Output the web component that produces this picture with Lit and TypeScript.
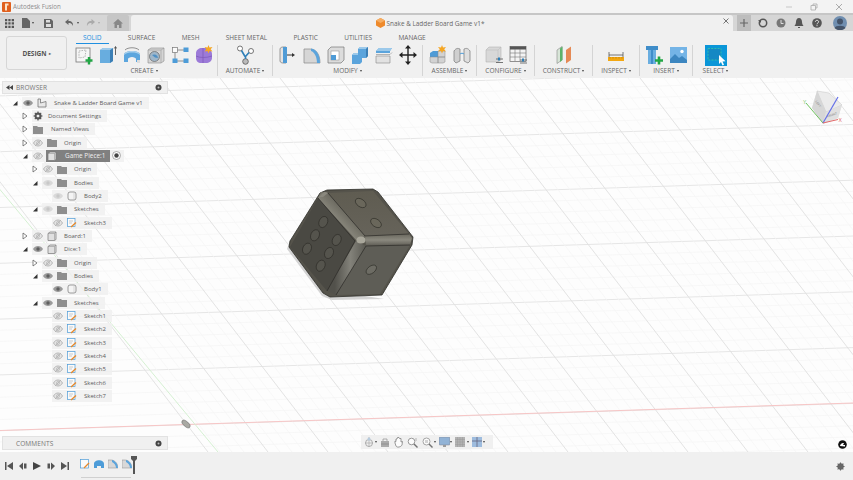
import { LitElement, html, css, svg } from 'lit';
import { customElement } from 'lit/decorators.js';

// ---- ribbon icons, all drawn in an 18x20 box
const s = (body: unknown) => html`<svg class="ico" viewBox="0 0 18 20" width="18" height="20">${body}</svg>`;

const ribbonIcons: Record<string, unknown> = {
  sketch: s(svg`<rect x="1" y="3" width="14" height="14" fill="#f6f6f6" stroke="#777" stroke-width=".8"/>
    <path d="M4 6l7-1-1 7-6 1z" fill="none" stroke="#999" stroke-width=".7" stroke-dasharray="1.5 1"/>
    <path d="M10.5 15.5h7M14 12v7.5" stroke="#22a645" stroke-width="2.4"/>`),
  extrude: s(svg`<path d="M1 5l3-2h10v13l-3 2H1z" fill="#68addf"/><path d="M11 5v13l3-2V3z" fill="#3c7fb5"/><path d="M1 5h10l3-2H4z" fill="#9cc9ea"/>
    <path d="M16.5 10V2M15.3 3.5l1.2-2 1.2 2" stroke="#444" stroke-width=".8" fill="none"/>`),
  revolve: s(svg`<path d="M1 10c0-3 4-4 8-4s8 1 8 4v7h-4v-3c0-1-2-2-4-2s-4 1-4 2v3H1z" fill="#5ca6de"/><path d="M1 10c0-3 4-4 8-4s8 1 8 4c-2-2-5-2.500-8-2.500S3 8 1 10z" fill="#a9d0ec"/>
    <path d="M14 15h3v3h-3z" fill="#ddd"/><path d="M2 5c3-3 11-3 14 0" fill="none" stroke="#666" stroke-width=".7"/>`),
  hole: s(svg`<path d="M1 5l3-2h13v13l-3 2H1z" fill="#d5d5d5" stroke="#8a8a8a" stroke-width=".6"/><path d="M14 5v13M1 5h13l3-2" stroke="#9a9a9a" stroke-width=".6" fill="none"/>
    <circle cx="7.500" cy="11.500" r="5" fill="#9fb6c9" stroke="#666" stroke-width=".7"/><path d="M5 10a4 4 0 0 1 6 3l-3-.5z" fill="#4f90c4"/>`),
  pattern: s(svg`<path d="M4 5h11M4 5v11M4 16h11M15 5v0" stroke="#777" stroke-width=".8" fill="none"/><rect x="1.500" y="2.500" width="5" height="5" fill="#fafafa" stroke="#777" stroke-width=".7"/>
    <rect x="12.500" y="2.500" width="5" height="4.500" fill="#4d9cd8"/><rect x="1.500" y="13.500" width="5" height="4.500" fill="#4d9cd8"/><rect x="12.500" y="13.500" width="5" height="4.500" fill="#4d9cd8"/>`),
  form: s(svg`<path d="M1 8c0-3 3-5 6-5h4c3 0 6 3 6 6v4c0 3-3 5-6 5H6c-3 0-5-2-5-5z" fill="#9c7ad8"/><path d="M8 3v15M1 11c4 2 10 2 16 0" stroke="#7b58b8" stroke-width=".7" fill="none"/>
    <path d="M13.500 0l1 2.500 3 -.5-1.800 2.200 1.800 2.300-3-.5-1 2.500-1-2.500-3 .5 1.800-2.300-1.800-2.200 3 .5z" fill="#f5a623"/>`),
  automate: s(svg`<circle cx="4" cy="3.500" r="2.500" fill="#fff" stroke="#555" stroke-width=".8"/><circle cx="15" cy="6" r="2.500" fill="#fff" stroke="#555" stroke-width=".8"/><circle cx="9.500" cy="16.500" r="2.800" fill="#bbb" stroke="#555" stroke-width=".8"/>
    <path d="M5.500 5.500L9 11.500M13 7.500L9.500 11.500M9.500 11.500V14" stroke="#2e7fb8" stroke-width="1.600" fill="none"/>`),
  press: s(svg`<path d="M1 4c0-1.500 2-2 3-2h3v16H4c-1 0-3-.5-3-2z" fill="#e4e4e4" stroke="#777" stroke-width=".7"/><path d="M4 2h4v16H4z" fill="#4f9bd6"/><path d="M8 10h6" stroke="#333" stroke-width="1"/><path d="M13 8l3 2-3 2z" fill="#333"/>`),
  fillet: s(svg`<path d="M1 18V4h6c6 0 10 5 10 14z" fill="#d6d6d6" stroke="#888" stroke-width=".7"/><path d="M8 3.500c5 .5 9 6 9 14.500h-3c0-6-2.500-11-6-12z" fill="#5ba4dc"/>`),
  shell: s(svg`<path d="M1 5l3-3h13v13l-3 3H1z" fill="#dcdcdc" stroke="#777" stroke-width=".7"/><rect x="4" y="6" width="8" height="9" fill="#fff" stroke="#888" stroke-width=".5"/><path d="M4 10h5v5H4z" fill="#4f9bd6"/>`),
  combine: s(svg`<path d="M1 10l2-2h8v9l-2 2H1z" fill="#5ba4dc"/><path d="M7 4l2-2h8v9l-2 2H7z" fill="#5ba4dc"/><path d="M7 4h8l2-2H9zM1 10h6V8H3z" fill="#9cc9ea"/><path d="M15 4v9l2-2V2z" fill="#3c7fb5"/>`),
  offset: s(svg`<path d="M1 6l3-3h13l-2 3v2H1z" fill="#5ba4dc"/><path d="M1 6h14l2-3H4z" fill="#9cc9ea"/><path d="M1 11h14v7H1z" fill="#e2e2e2" stroke="#888" stroke-width=".6"/><path d="M1 9.500h14l2-2" stroke="#777" stroke-width=".5" fill="none"/>`),
  move: s(svg`<path d="M9 2v16M1 10h16" stroke="#222" stroke-width="1.400"/><path d="M9 0l3 3.500H6zM9 20l3-3.500H6zM0 10l3.500-3v6zM18 10l-3.500-3v6z" fill="#222"/>`),
  assemble: s(svg`<path d="M1 8l3-2h5v6H1z" fill="#4f9bd6"/><path d="M9 6h7v6H9zM1 12h8v6H3l-2-1zM9 12h7v5l-2 1H9z" fill="#d2d2d2" stroke="#888" stroke-width=".5"/>
    <path d="M13 0l1 2.500 3-.5-1.800 2.200L17 6.500l-3-.5-1 2.500-1-2.500-3 .5 1.800-2.300L9 2l3 .5z" fill="#f5a623"/>`),
  joint: s(svg`<path d="M1 6c2-3 4-3 6-2v12l-4 2-2-2z" fill="#cfcfcf" stroke="#777" stroke-width=".7"/><path d="M17 6c-2-3-4-3-6-2v12l4 2 2-2z" fill="#dedede" stroke="#777" stroke-width=".7"/><path d="M7 9c1-1 3-1 4 0" stroke="#4f9bd6" stroke-width="1" fill="none"/>`),
  param: s(svg`<path d="M1 5l3-3h12v13l-3 2H1z" fill="#d8d8d8" stroke="#aaa" stroke-width=".5"/><path d="M1 5h12l3-3M13 5v12" stroke="#bbb" stroke-width=".5" fill="none"/>
    <path d="M11 14h7M11 17.500h7" stroke="#555" stroke-width=".8"/><path d="M13 12.500h2v3h-2z" fill="#2e7fb8"/>`),
  table: s(svg`<rect x="1" y="1.500" width="16" height="15" fill="#f4f4f4" stroke="#666" stroke-width=".7"/><rect x="1" y="1.500" width="16" height="3" fill="#555"/><path d="M1 8h16M1 12h16M6 4v12M11 4v12" stroke="#777" stroke-width=".6"/>
    <path d="M11 15h7M11 18h7" stroke="#555" stroke-width=".8"/><path d="M13 13.500h2v3h-2z" fill="#2e7fb8"/>`),
  construct: s(svg`<path d="M2 5l5-3.500V15l-5 3.500z" fill="#d8e5d8" stroke="#888" stroke-width=".6"/><path d="M5 3.500l2.500-2V15L5 17z" fill="#5bb36a"/><path d="M11 5l5-3.500V15l-5 3.500z" fill="#e58a55"/>`),
  inspect: s(svg`<path d="M2 7v6M16 7v6M2 10h14" stroke="#555" stroke-width=".8"/><rect x="1" y="12" width="16" height="4" fill="#f3a712"/><path d="M3 12v1.500M6 12v1.500M9 12v1.500M12 12v1.500M15 12v1.500" stroke="#9a6a00" stroke-width=".5"/>`),
  insertBolt: s(svg`<path d="M1 1h12v4H1z" fill="#3f8dc9"/><path d="M3 5h8v14H3z" fill="#6aaee0"/><path d="M7 1v18" stroke="#3f8dc9" stroke-width="2"/><path d="M10 15.500h8M14 11.500v8" stroke="#22a645" stroke-width="2.600"/>`),
  insertImg: s(svg`<rect x="1" y="2" width="17" height="16" fill="#74b4e6"/><circle cx="13" cy="6.500" r="1.700" fill="#fff"/><path d="M1 14l5-5 4 4 3-2 5 4v3H1z" fill="#3c86c0"/>`),
};

const selectIcon = html`<svg class="sel-ico" viewBox="0 0 22 21" width="22" height="21"><rect width="22" height="21" fill="#0a96d8"/>
  <rect x="3" y="3.500" width="13" height="11.500" fill="#1488c4" stroke="#37c8a5" stroke-width=".8" stroke-dasharray="2 1.200"/><path d="M14 10l0 9 2-2 1.500 3.500 1.500-.7-1.500-3.300 3-.3z" fill="#fff"/></svg>`;

// x positions of groups come from their fixed widths, separators are the right borders
const groups = [
  { label: 'CREATE', w: 147, icons: ['sketch', 'extrude', 'revolve', 'hole', 'pattern', 'form'] },
  { label: 'AUTOMATE', w: 55, icons: ['automate'] },
  { label: 'MODIFY', w: 150, icons: ['press', 'fillet', 'shell', 'combine', 'offset', 'move'] },
  { label: 'ASSEMBLE', w: 54, icons: ['assemble', 'joint'] },
  { label: 'CONFIGURE', w: 58, icons: ['param', 'table'] },
  { label: 'CONSTRUCT', w: 58, icons: ['construct'] },
  { label: 'INSPECT', w: 47, icons: ['inspect'] },
  { label: 'INSERT', w: 53, icons: ['insertBolt', 'insertImg'] },
  { label: 'SELECT', w: 45, icons: [] },
];

const tabs = ['SOLID', 'SURFACE', 'MESH', 'SHEET METAL', 'PLASTIC', 'UTILITIES', 'MANAGE'];

// ---- browser tree
const eyeIcon = (kind: string) => {
  if (kind === 'on')
    return html`<svg class="t-eye" viewBox="0 0 10 8" width="10" height="8"><path d="M0 4c2-4 8-4 10 0-2 4-8 4-10 0z" fill="#9a9a9a"/><circle cx="5" cy="4" r="1.700" fill="#5f5f5f"/></svg>`;
  if (kind === 'faint')
    return html`<svg class="t-eye" viewBox="0 0 10 8" width="10" height="8"><path d="M0 4c2-4 8-4 10 0-2 4-8 4-10 0z" fill="#d9d9d9"/><circle cx="5" cy="4" r="1.700" fill="#c8c8c8"/></svg>`;
  return html`<svg class="t-eye" viewBox="0 0 10 8" width="10" height="8"><path d="M.5 4c2-4 7-4 9 0-2 4-7 4-9 0z" fill="#e4e4e4" stroke="#aaa" stroke-width=".8"/><path d="M2 7l6-6" stroke="#aaa" stroke-width=".7"/><circle cx="5" cy="4" r="1.500" fill="none" stroke="#aaa" stroke-width=".6"/></svg>`;
};

const treeIcons: Record<string, unknown> = {
  doc: html`<svg viewBox="0 0 10 10" width="10" height="10"><path d="M1 9V1h2.500v4L9 3.500V9z" fill="#e8e8e8" stroke="#777" stroke-width=".8"/></svg>`,
  gear: html`<svg viewBox="0 0 10 10" width="10" height="10"><circle cx="5" cy="5" r="2.700" fill="none" stroke="#555" stroke-width="1.700"/><path d="M5 .5v9M.5 5h9M1.800 1.800l6.400 6.400M8.200 1.800L1.800 8.200" stroke="#555" stroke-width="1.200"/><circle cx="5" cy="5" r="1.300" fill="#eee"/></svg>`,
  folder: html`<svg viewBox="0 0 10 9" width="10" height="9"><path d="M0 1h4l1 1h5v7H0z" fill="#8e8e8e"/></svg>`,
  comp: html`<svg viewBox="0 0 10 10" width="10" height="10"><path d="M1 2.500L3 1h6v7.500L7.500 9.500H1z" fill="#e0e0e0" stroke="#777" stroke-width=".7"/><path d="M7.500 2.500v7M1 2.500h6.500L9 1" stroke="#888" stroke-width=".5" fill="none"/></svg>`,
  body: html`<svg viewBox="0 0 10 10" width="10" height="10"><rect x="1" y="1" width="8" height="8" rx="2" fill="#f4f4f4" stroke="#777" stroke-width=".7"/><path d="M7 1.500v7" stroke="#bbb" stroke-width=".5"/></svg>`,
  sk: html`<svg viewBox="0 0 10 10" width="10" height="10"><rect x=".5" y=".5" width="7.500" height="8" fill="#fafafa" stroke="#4d9cd8" stroke-width=".7"/><path d="M2 3h4M2 5h3" stroke="#999" stroke-width=".5"/><path d="M4 9l5-4.500" stroke="#e8882a" stroke-width="1.300"/></svg>`,
};

type Node = { lvl: number; arrow?: 'open' | 'closed'; eye?: string; icon: string; label: string; sel?: boolean; tight?: boolean };

const tree: Node[] = [
  { lvl: 0, arrow: 'open', eye: 'on', icon: 'doc', label: 'Snake & Ladder Board Game v1' },
  { lvl: 1, arrow: 'closed', icon: 'gear', label: 'Document Settings', tight: true },
  { lvl: 1, arrow: 'closed', icon: 'folder', label: 'Named Views' },
  { lvl: 1, arrow: 'closed', eye: 'off', icon: 'folder', label: 'Origin' },
  { lvl: 1, arrow: 'open', eye: 'off', icon: 'comp', label: 'Game Piece:1', sel: true },
  { lvl: 2, arrow: 'closed', eye: 'off', icon: 'folder', label: 'Origin' },
  { lvl: 2, arrow: 'open', eye: 'faint', icon: 'folder', label: 'Bodies' },
  { lvl: 3, eye: 'faint', icon: 'body', label: 'Body2' },
  { lvl: 2, arrow: 'open', eye: 'faint', icon: 'folder', label: 'Sketches' },
  { lvl: 3, eye: 'off', icon: 'sk', label: 'Sketch3' },
  { lvl: 1, arrow: 'closed', eye: 'off', icon: 'comp', label: 'Board:1' },
  { lvl: 1, arrow: 'open', eye: 'on', icon: 'comp', label: 'Dice:1' },
  { lvl: 2, arrow: 'closed', eye: 'off', icon: 'folder', label: 'Origin' },
  { lvl: 2, arrow: 'open', eye: 'on', icon: 'folder', label: 'Bodies' },
  { lvl: 3, eye: 'on', icon: 'body', label: 'Body1' },
  { lvl: 2, arrow: 'open', eye: 'on', icon: 'folder', label: 'Sketches' },
  ...[1, 2, 3, 4, 5, 6, 7].map((n) => ({ lvl: 3, eye: 'off', icon: 'sk', label: `Sketch${n}` })),
];

const arrowIcon = (a?: string) => {
  if (a === 'open') return html`<svg viewBox="0 0 6 6" width="6" height="6"><path d="M5.500 1v4.500H1z" fill="#333"/></svg>`;
  if (a === 'closed') return html`<svg viewBox="0 0 6 8" width="6" height="8"><path d="M1 1l4 3-4 3z" fill="#fff" stroke="#555" stroke-width=".7"/></svg>`;
  return null;
};

const pin = html`<svg class="pin" viewBox="0 0 7 7" width="7" height="7"><circle cx="3.500" cy="3.500" r="3" fill="#444"/><circle cx="3.500" cy="3.500" r="1" fill="#bbb"/></svg>`;

// ---- canvas: grid, axes, dice and view cube share page coordinates
const gridLines = () => {
  const out: unknown[] = [];
  // near-horizontal family
  for (let i = -6; i < 45; i++) {
    const yL = 151.7 + i * 11.16;
    const major = i % 5 === 0;
    out.push(svg`<line x1="0" y1=${yL} x2="853" y2=${yL - 0.032 * 853} stroke=${major ? '#e6e6e6' : '#f5f5f5'} stroke-width=${major ? 1 : 0.7}/>`);
  }
  // diagonal family
  for (let i = -45; i < 75; i++) {
    const x0 = 460 + i * 12;
    const major = (i + 500) % 5 === 0;
    out.push(svg`<line x1=${x0} y1="78" x2=${x0 + 0.77 * 374} y2="452" stroke=${major ? '#e0e0e0' : '#f5f5f5'} stroke-width=${major ? 0.9 : 0.7}/>`);
  }
  return out;
};

const dice = svg`
  <path d="M287 249L322 296L332 300L384 299L340 292L290 240z" fill="#c9c9c9" opacity=".8"/>
  <path d="M320 193L327 190L373 189L378 192L413 237L412 245L382 295L330 297L323 293L289 247L290 241z" fill="#55534b" stroke="#2f2e2a" stroke-width=".8"/>
  <path d="M328 193L373 191L409 234L365 236z" fill="url(#dTop)"/>
  <path d="M318 198L355 241L327 291L290 247z" fill="#4a4943"/>
  <path d="M366 246L410 245L380 294L336 295z" fill="#5e5d56"/>
  <path d="M321 192L328 193L365 236L357 241L318 198z" fill="url(#dBandA)"/>
  <path d="M365 236L409 234L412 238L410 245L366 246z" fill="url(#dBandB)"/>
  <path d="M356 241L366 246L336 295L327 291z" fill="url(#dBandC)"/>
  <path d="M322 194C324 191 326 192 328 193L323 197L319 197z" fill="#8a887e"/>
  <ellipse cx="361" cy="240" rx="4.500" ry="3.500" fill="#a9a79b"/>
  <path d="M318 198L355 241L327 291M365 236L409 234M366 246L410 245M336 295L366 246M328 193L365 236" fill="none" stroke="#2b2a27" stroke-width=".7"/>
  ${[[323.3, 222], [315, 235.3], [307, 248.7], [336.7, 240], [329, 253], [320.7, 265.7]].map(
    ([x, y]) => svg`<ellipse cx=${x} cy=${y} rx="4.200" ry="5.800" transform="rotate(25 ${x} ${y})" fill="#55544d" stroke="#2b2a25" stroke-width=".6"/>`)}
  ${[[360.7, 203], [376, 223]].map(
    ([x, y]) => svg`<ellipse cx=${x} cy=${y} rx="6" ry="3.800" transform="rotate(35 ${x} ${y})" fill="#6a675b" stroke="#2b2a25" stroke-width=".6"/>`)}
  <ellipse cx="371.300" cy="269.700" rx="6" ry="3.600" transform="rotate(-38 371.300 269.700)" fill="#6d6c64" stroke="#2b2a25" stroke-width=".6"/>
`;

const viewCube = svg`
  <path d="M823 124L812 108L817 91L842 105L838 118z" fill="#e4e4e4"/>
  <path d="M817 91L829 93L842 105L826 112z" fill="#ebebeb" stroke="#c6c6c6" stroke-width=".5"/>
  <path d="M812 108L817 91L826 112L823 124z" fill="#d6d6d6"/>
  <path d="M826 112L842 105L838 118L823 124z" fill="#e0e0e0"/>
  <text x="814" y="104" font-size="3" fill="#777" font-family="Liberation Sans" transform="rotate(55 817 104)">LEFT</text>
  <text x="827" y="117" font-size="3" fill="#777" font-family="Liberation Sans" transform="rotate(-20 829 116)">FRONT</text>
  <path d="M823 123L806 103" stroke="#6ec25e" stroke-width="1"/>
  <path d="M823 123L838 97" stroke="#6470e8" stroke-width="1.200"/>
  <path d="M823 123L838 119.500" stroke="#e2696a" stroke-width="1"/>
  <text x="838.500" y="121.500" font-size="5" fill="#e2696a" font-family="Liberation Sans">X</text>
  <text x="803" y="104" font-size="5" fill="#6ec25e" font-family="Liberation Sans">Y</text>
`;

@customElement('app-root')
export class AppRoot extends LitElement {
  static styles = css`
    :host {
      display: block;
      width: 853px;
      height: 480px;
      overflow: hidden;
      font-family: 'Open Sans', 'Liberation Sans', sans-serif;
      font-size: 6.5px;
      color: #666;
      background: #f0f0f0;
    }
    .page { display: flex; flex-direction: column; height: 480px; }
    svg { display: block; flex: none; }

    .title { height: 13px; flex: none; display: flex; align-items: center; background: #f3f3f3; padding-left: 2px; color: #8c8c8c; font-size: 6.2px; }
    .title .name { margin-left: 2px; flex: 1; }
    .win { display: flex; gap: 17px; padding-right: 10px; align-items: center; }

    .tabbar { height: 18px; flex: none; display: flex; background: #d6d6d6; border-top: 2px solid #c6c6c6; box-sizing: border-box; }
    .qa { width: 131px; display: flex; align-items: center; padding-left: 5px; box-sizing: border-box; gap: 0; }
    .home { margin-left: auto; width: 22px; height: 100%; background: #c6c6c6; border-radius: 2px 2px 0 0; margin-right: 2px; display: flex; align-items: center; justify-content: center; }
    .doc { width: 602px; background: #f0f0f0; display: flex; align-items: center; justify-content: center; position: relative; color: #666; font-size: 6.4px; gap: 2px; border-radius: 3px 3px 0 0; padding-right: 4px; box-sizing: border-box; }
    .doc .x { position: absolute; right: 4px; top: 3px; }
    .right { flex: 1; display: flex; align-items: center; gap: 7px; padding-left: 4px; }
    .plus { width: 14px; height: 16px; background: #bdbdbd; display: flex; align-items: center; justify-content: center; }

    .ribbon { height: 47px; flex: none; display: flex; background: #f0f0f0; }
    .design { width: 61px; height: 34px; margin: 5px 4px 0 6px; flex: none; box-sizing: border-box; border: 1px solid #d6d6d6; border-radius: 3px; display: flex; align-items: center; justify-content: center; font-weight: 700; color: #555; font-size: 6.5px; gap: 2px; }
    .rcol { flex: 1; display: flex; flex-direction: column; }
    .tabs { height: 12px; flex: none; display: flex; gap: 12.300px; box-sizing: border-box; padding-top: 2px; margin-left: 5px; }
    .tab { padding: 0 7px; height: 10px; line-height: 9px; white-space: nowrap; }
    .tab.on { color: #1f8fe0; border-bottom: 1px solid #1f8fe0; }
    .tools { display: flex; height: 35px; margin-left: 0; }
    .group { flex: none; box-sizing: border-box; display: flex; flex-direction: column; align-items: center; margin-top: 2px; height: 31px; border-right: 1px solid #d4d4d4; }
    .group:last-child { border-right: 0; }
    .icons { display: flex; gap: 6px; height: 21px; }
    .glabel { display: flex; align-items: center; gap: 2px; line-height: 9px; white-space: nowrap; }
    .caret { width: 0; height: 0; border-left: 1.500px solid transparent; border-right: 1.500px solid transparent; border-top: 2px solid #444; flex: none; }

    .canvas { position: relative; flex: 1; background: #fdfdfd; overflow: hidden; }
    .scene { position: absolute; inset: 0; }

    .panel { position: absolute; left: 2px; width: 166px; height: 13px; box-sizing: border-box; background: #f0f0f0; border: 1px solid #e2e2e2; display: flex; align-items: center; color: #777; padding-left: 3px; letter-spacing: .1px; }
    .panel.browser { top: 3px; }
    .panel.comments { top: 358px; height: 14px; padding-left: 13px; }
    .panel .pname { margin-left: 3px; flex: 1; }
    .pin { margin-right: 5px; }

    .tree { position: absolute; left: 0; top: 18px; display: flex; flex-direction: column; font-size: 6px; }
    .row { display: flex; align-items: center; height: 13.330px; }
    .arrow { width: 12px; flex: none; display: flex; justify-content: center; padding-right: 2px; box-sizing: border-box; }
    .chip { display: flex; align-items: center; height: 12px; background: rgba(240, 240, 240, .85); padding: 0 6px 0 1px; white-space: nowrap; color: #5c5c5c; }
    .t-eye { margin-right: 4px; }
    .lbl { margin-left: 7px; }
    .tight .lbl { margin-left: 5px; }
    .noeye .lbl { margin-left: 8px; }
    .tight.noeye .lbl { margin-left: 5px; }
    .sel { display: flex; align-items: center; height: 12px; background: #808080; color: #f0f0f0; margin-left: -1px; padding: 0 5px 0 1px; font-size: 6.400px; }
    .sel .lbl { margin-left: 8px; }
    .radio { margin: 0 -3px 0 2px; }

    .nav { position: absolute; left: 361px; top: 357px; height: 14px; width: 132px; background: #f0f0f0; display: flex; align-items: center; padding-left: 3px; box-sizing: border-box; gap: 1px; }
    .nav svg { opacity: .8; }
    .nav .caret { margin-right: 2px; }
    .fusion-badge { position: absolute; left: 838px; top: 362px; }

    .timeline { height: 28px; flex: none; background: #f0f0f0; display: flex; align-items: center; padding-left: 5px; }
    .play { display: flex; gap: 6px; }
    .steps { display: flex; gap: 4px; margin-left: 11px; position: relative; }
    .ruler { position: absolute; left: 1px; right: 6px; bottom: -4px; height: 2px; border-bottom: 1px solid #d0d0d0; }
    .marker { margin-left: -5px; margin-top: -3px; }
    .tgear { margin-left: auto; margin-right: 8px; }
  `;

  private tabBar() {
    return html`<div class="tabbar">
      <div class="qa">
        <svg viewBox="0 0 10 10" width="9" height="9"><path d="M0 0h2.500v2.500H0zM3.700 0h2.500v2.500H3.700zM7.400 0H10v2.500H7.400zM0 3.700h2.500v2.500H0zM3.700 3.700h2.500v2.500H3.700zM7.400 3.700H10v2.500H7.400zM0 7.400h2.500V10H0zM3.700 7.400h2.500V10H3.700zM7.400 7.400H10V10H7.400z" fill="#555"/></svg>
        <svg style="margin-left:8px" viewBox="0 0 8 10" width="8" height="10"><path d="M0 0h5l3 3v7H0z" fill="#666"/></svg>
        <span class="caret" style="margin-left:2px"></span>
        <svg style="margin-left:10px" viewBox="0 0 9 9" width="9" height="9"><path d="M0 0h7l2 2v7H0z" fill="#666"/><rect x="2" y="1" width="4" height="2.500" fill="#ddd"/><rect x="2" y="5" width="5" height="3" fill="#ddd"/></svg>
        <svg style="margin-left:12px" viewBox="0 0 9 8" width="9" height="8"><path d="M3.500 0L0 3l3.500 3V4c2 0 3.500.500 4.500 3 .3-3-1-5-4.500-5z" fill="#666"/></svg>
        <span class="caret" style="margin-left:3px"></span>
        <svg style="margin-left:7px" viewBox="0 0 9 8" width="9" height="8"><path d="M5.500 0L9 3 5.500 6V4c-2 0-3.500.500-4.500 3-.3-3 1-5 4.500-5z" fill="#aaa"/></svg>
        <span class="caret" style="margin-left:3px;border-top-color:#aaa"></span>
        <div class="home"><svg viewBox="0 0 10 9" width="10" height="9"><path d="M5 0l5 4.500H8.500V9H6V6H4v3H1.500V4.500H0z" fill="#888"/></svg></div>
      </div>
      <div class="doc">
        <svg viewBox="0 0 9 10" width="9" height="10"><path d="M4.500 0L9 2.500v5L4.500 10 0 7.500v-5z" fill="#ee8a2c"/><path d="M4.500 0L9 2.500 4.500 5 0 2.500z" fill="#f6ad62"/></svg>
        <span>Snake &amp; Ladder Board Game v1*</span>
        <svg class="x" viewBox="0 0 6 6" width="6" height="6"><path d="M.5.500l5 5M5.500.500l-5 5" stroke="#666" stroke-width=".9"/></svg>
      </div>
      <div class="right">
        <div class="plus"><svg viewBox="0 0 8 8" width="8" height="8"><path d="M4 0v8M0 4h8" stroke="#666" stroke-width="1.200"/></svg></div>
        <svg viewBox="0 0 10 10" width="10" height="10"><circle cx="5" cy="5" r="3.700" fill="none" stroke="#555" stroke-width="1.500"/><path d="M0 2l3 0 0 3z" fill="#555"/></svg>
        <svg style="margin-left:1px" viewBox="0 0 10 10" width="10" height="10"><circle cx="5" cy="5" r="4.500" fill="#777"/><path d="M5 2v3.500h2.500" stroke="#ddd" fill="none"/></svg>
        <svg style="margin-left:1px" viewBox="0 0 10 10" width="10" height="10"><path d="M5 0c2 0 3 2 3 4s1 3 1.500 4h-9C1 7 2 6 2 4s1-4 3-4zM4 9h2v1H4z" fill="#555"/></svg>
        <svg style="margin-left:1px" viewBox="0 0 10 10" width="10" height="10"><circle cx="5" cy="5" r="4.800" fill="#555"/><path d="M3.400 3.800c0-2 3.200-2 3.200 0 0 1.200-1.600 1.200-1.600 2.500M5 7.200v1" stroke="#eee" stroke-width="1" fill="none"/></svg>
        <svg style="margin-left:4px" viewBox="0 0 14 14" width="14" height="14"><circle cx="7" cy="7" r="7" fill="#6f8eb0"/><circle cx="7" cy="5.500" r="3" fill="#44546a"/><path d="M1.500 12c1-3 10-3 11 0-3 3-8 3-11 0z" fill="#44546a"/></svg>
      </div>
    </div>`;
  }

  private ribbon() {
    return html`<div class="ribbon">
      <div class="design"><span>DESIGN</span><span style="font-size:4px">▸</span></div>
      <div class="rcol">
        <div class="tabs">${tabs.map((t, i) => html`<div class="tab ${i === 0 ? 'on' : ''}">${t}</div>`)}</div>
        <div class="tools">
          ${groups.map(
            (g) => html`<div class="group" style="width:${g.w}px">
              <div class="icons">${g.label === 'SELECT' ? selectIcon : g.icons.map((n) => ribbonIcons[n])}</div>
              <div class="glabel"><span>${g.label}</span><span class="caret"></span></div>
            </div>`
          )}
        </div>
      </div>
    </div>`;
  }

  private row(n: Node) {
    const cls = `chip ${n.eye ? '' : 'noeye'} ${n.tight ? 'tight' : ''}`;
    return html`<div class="row" style="padding-left:${10 + n.lvl * 10}px">
      <div class="arrow">${arrowIcon(n.arrow)}</div>
      <div class=${cls}>
        ${n.eye ? eyeIcon(n.eye) : null}
        ${n.sel
          ? html`<div class="sel">${treeIcons[n.icon]}<span class="lbl">${n.label}</span></div>
              <svg class="radio" viewBox="0 0 9 9" width="9" height="9"><circle cx="4.500" cy="4.500" r="4" fill="#fff" stroke="#888" stroke-width=".7"/><circle cx="4.500" cy="4.500" r="2.200" fill="#444"/></svg>`
          : html`${treeIcons[n.icon]}<span class="lbl">${n.label}</span>`}
      </div>
    </div>`;
  }

  private navBar() {
    return html`<div class="nav">
      <svg viewBox="0 0 10 11" width="10" height="11"><circle cx="5" cy="6" r="3.500" fill="none" stroke="#888" stroke-width=".8"/><path d="M5 0v10M1 6h8" stroke="#999" stroke-width=".7"/><circle cx="5" cy="2" r="1.500" fill="#a8c2da"/></svg>
      <span class="caret"></span>
      <svg viewBox="0 0 10 9" width="10" height="9"><path d="M1 3h8v6H1z" fill="#999"/><path d="M3 3V1h4v2M1 6h8" stroke="#666" stroke-width=".6" fill="none"/></svg>
      <svg style="margin-left:1.500px" viewBox="0 0 11 11" width="11" height="11"><path d="M2 6V4l1 .500V2l1 0 .500-1.500L6 .500l.500 1 1.500 0V5l1.500-.500L9 8c-1 2-5 3-6 1z" fill="#fff" stroke="#666" stroke-width=".8"/></svg>
      <svg style="margin-left:2.500px" viewBox="0 0 11 11" width="11" height="11"><circle cx="4.500" cy="4.500" r="3.300" fill="#fff" stroke="#777" stroke-width=".9"/><path d="M7 7l3.500 3.500" stroke="#555" stroke-width="1.400"/><path d="M9 1v3" stroke="#777" stroke-width=".6"/></svg>
      <svg style="margin-left:2.500px" viewBox="0 0 11 11" width="11" height="11"><circle cx="4.500" cy="4.500" r="3.500" fill="#fff" stroke="#888" stroke-width=".9"/><rect x="3" y="3" width="3" height="3" fill="#ccc"/><path d="M7 7l3.500 3.500" stroke="#555" stroke-width="1.400"/></svg>
      <span class="caret"></span>
      <svg viewBox="0 0 11 11" width="11" height="11"><rect x="0" y="0" width="11" height="8" rx="1" fill="#7ba4d0" stroke="#667" stroke-width=".5"/><path d="M4 8h3v2H4z" fill="#888"/></svg>
      <span class="caret" style="margin-left:-1px"></span>
      <svg viewBox="0 0 10 10" width="10" height="10"><rect width="10" height="10" fill="#a5a5a5"/><path d="M2.500 0v10M5 0v10M7.500 0v10M0 2.500h10M0 5h10M0 7.500h10" stroke="#858585" stroke-width=".5"/></svg>
      <span class="caret" style="margin-left:1px"></span>
      <svg viewBox="0 0 10 10" width="10" height="10"><rect width="10" height="10" fill="#8ab0da"/><path d="M5 0v10M0 4h10" stroke="#446" stroke-width=".8"/></svg>
      <span class="caret"></span>
    </div>`;
  }

  private timeline() {
    const ctl = (d: string) => html`<svg viewBox="0 0 8 8" width="8" height="8"><path d=${d} fill="#555"/></svg>`;
    return html`<div class="timeline">
      <div class="play">
        ${ctl('M0 0h1.500v8H0zM8 0v8L2 4z')}
        ${ctl('M0 4l4-3.500V8zM5 1.500h2.500v5H5z')}
        <svg viewBox="0 0 8 8" width="8" height="8"><path d="M0 0l8 4-8 4z" fill="#444"/></svg>
        ${ctl('M8 4L4 .5V8zM.5 1.500H3v5H.5z')}
        ${ctl('M8 0H6.500v8H8zM0 0v8l6-4z')}
      </div>
      <div class="steps">
        <svg viewBox="0 0 10 10" width="10" height="10"><rect x=".5" y=".5" width="8" height="8.500" fill="#fafafa" stroke="#4d9cd8" stroke-width=".7"/><path d="M4 9l5-5" stroke="#e8882a" stroke-width="1.300"/></svg>
        <svg viewBox="0 0 10 10" width="10" height="10"><path d="M0 5c0-5 10-5 10 0v4H7V7H3v2H0z" fill="#4d9cd8"/></svg>
        <svg viewBox="0 0 10 10" width="10" height="10"><path d="M0 9V1h3c4 0 7 4 7 8z" fill="#d8d8d8" stroke="#888" stroke-width=".5"/><path d="M4 1c3 .5 6 4 6 8H8c0-3-2-5-4-6z" fill="#5ba4dc"/></svg>
        <svg viewBox="0 0 10 10" width="10" height="10"><path d="M0 9V1h3c4 0 7 4 7 8z" fill="#d8d8d8" stroke="#888" stroke-width=".5"/><path d="M4 1c3 .5 6 4 6 8H8c0-3-2-5-4-6z" fill="#5ba4dc"/></svg>
        <svg class="marker" viewBox="0 0 6 18" width="6" height="18"><path d="M0 0h6v3L4 5v13H2V5L0 3z" fill="#555"/></svg>
        <div class="ruler"></div>
      </div>
      <svg class="tgear" viewBox="0 0 10 10" width="9" height="9"><circle cx="5" cy="5" r="2.700" fill="none" stroke="#666" stroke-width="1.700"/><path d="M5 .5v9M.5 5h9M1.800 1.800l6.400 6.400M8.200 1.800L1.800 8.200" stroke="#666" stroke-width="1.200"/></svg>
    </div>`;
  }

  render() {
    return html`<div class="page">
      <div class="title">
        <svg viewBox="0 0 9 10" width="9" height="10"><rect width="9" height="10" rx="1" fill="#e0601e"/><path d="M3 1.500h3.500v2H5v5H3z" fill="#fbe3c8"/></svg>
        <span class="name">Autodesk Fusion</span>
        <div class="win">
          <svg viewBox="0 0 8 8" width="8" height="8"><path d="M1 4h6" stroke="#bbb" stroke-width=".8"/></svg>
          <svg viewBox="0 0 8 8" width="8" height="8"><path d="M1 2.500h4.500V7H1zM3 2.500V1h4v4H5.500" fill="none" stroke="#aaa" stroke-width=".8"/></svg>
          <svg viewBox="0 0 8 8" width="8" height="8"><path d="M1 1l6 6M7 1l-6 6" stroke="#999" stroke-width=".8"/></svg>
        </div>
      </div>
      ${this.tabBar()}
      ${this.ribbon()}
      <div class="canvas">
        <svg class="scene" viewBox="0 78 853 374" width="853" height="374">
          <defs>
            <linearGradient id="dTop" x1="0" y1="0" x2="0" y2="1"><stop offset="0" stop-color="#5f5c51"/><stop offset="1" stop-color="#66635a"/></linearGradient>
            <linearGradient id="dBandA" x1="1" y1="0" x2="0" y2="1"><stop offset=".3" stop-color="#5b5950"/><stop offset=".6" stop-color="#8a887d"/><stop offset="1" stop-color="#55534b"/></linearGradient>
            <linearGradient id="dBandB" x1="0" y1="0" x2="0" y2="1"><stop offset="0" stop-color="#6a685e"/><stop offset=".5" stop-color="#8b897f"/><stop offset="1" stop-color="#5c5a52"/></linearGradient>
            <linearGradient id="dBandC" x1="0" y1="0" x2="1" y2="0"><stop offset=".2" stop-color="#52514b"/><stop offset=".6" stop-color="#83827a"/><stop offset="1" stop-color="#5a5952"/></linearGradient>
          </defs>
          ${gridLines()}
          <line x1="0" y1="430.500" x2="853" y2="403" stroke="#f7c6c6" stroke-width="1"/>
          <line x1="-3" y1="186" x2="218" y2="452" stroke="#d5f0d2" stroke-width="1"/>
          <g transform="rotate(40 186 424)"><ellipse cx="186" cy="424" rx="5" ry="2.500" fill="#a9a9a3" stroke="#777" stroke-width=".6"/></g>
          ${dice}
          ${viewCube}
        </svg>
        <div class="panel browser">
          <svg viewBox="0 0 7 5" width="7" height="5"><path d="M3.500 0v5L0 2.500zM7 0v5L3.500 2.500z" fill="#444"/></svg>
          <span class="pname" style="margin-left:3px">BROWSER</span>${pin}
        </div>
        <div class="tree">${tree.map((n) => this.row(n))}</div>
        <div class="panel comments"><span class="pname" style="margin-left:0">COMMENTS</span>${pin}</div>
        ${this.navBar()}
        <svg class="fusion-badge" viewBox="0 0 9 9" width="9" height="9"><circle cx="4.500" cy="4.500" r="4.300" fill="#111"/><path d="M2 6c0-2 2-3.500 4-3L5 5h2v1.500z" fill="#fff"/></svg>
      </div>
      ${this.timeline()}
    </div>`;
  }
}
